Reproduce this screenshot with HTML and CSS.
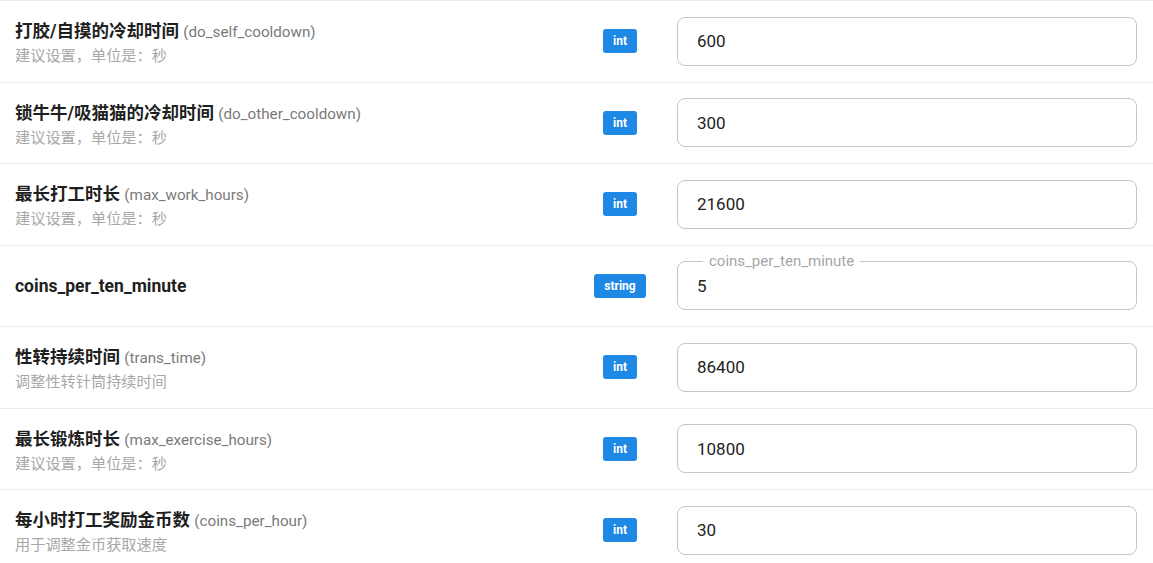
FILE: index.html
```html
<!DOCTYPE html>
<html lang="zh-CN">
<head>
<meta charset="utf-8">
<title>配置</title>
<link rel="stylesheet" href="styles.css">
</head>
<body>
<div class="list">
  <div class="row">
    <div class="label with-desc">
      <div class="title">打胶/自摸的冷却时间 <span class="key">(do_self_cooldown)</span></div>
      <div class="desc">建议设置，单位是：秒</div>
    </div>
    <div class="type"><span class="badge">int</span></div>
    <div class="field"><div class="input">600</div></div>
  </div>
  <div class="row">
    <div class="label with-desc">
      <div class="title">锁牛牛/吸猫猫的冷却时间 <span class="key">(do_other_cooldown)</span></div>
      <div class="desc">建议设置，单位是：秒</div>
    </div>
    <div class="type"><span class="badge">int</span></div>
    <div class="field"><div class="input">300</div></div>
  </div>
  <div class="row">
    <div class="label with-desc">
      <div class="title">最长打工时长 <span class="key">(max_work_hours)</span></div>
      <div class="desc">建议设置，单位是：秒</div>
    </div>
    <div class="type"><span class="badge">int</span></div>
    <div class="field"><div class="input">21600</div></div>
  </div>
  <div class="row">
    <div class="label">
      <div class="title">coins_per_ten_minute</div>
    </div>
    <div class="type"><span class="badge">string</span></div>
    <div class="field"><div class="input outlined"><span class="legend">coins_per_ten_minute</span>5</div></div>
  </div>
  <div class="row">
    <div class="label with-desc">
      <div class="title">性转持续时间 <span class="key">(trans_time)</span></div>
      <div class="desc">调整性转针筒持续时间</div>
    </div>
    <div class="type"><span class="badge">int</span></div>
    <div class="field"><div class="input">86400</div></div>
  </div>
  <div class="row">
    <div class="label with-desc">
      <div class="title">最长锻炼时长 <span class="key">(max_exercise_hours)</span></div>
      <div class="desc">建议设置，单位是：秒</div>
    </div>
    <div class="type"><span class="badge">int</span></div>
    <div class="field"><div class="input">10800</div></div>
  </div>
  <div class="row">
    <div class="label with-desc">
      <div class="title">每小时打工奖励金币数 <span class="key">(coins_per_hour)</span></div>
      <div class="desc">用于调整金币获取速度</div>
    </div>
    <div class="type"><span class="badge">int</span></div>
    <div class="field"><div class="input">30</div></div>
  </div>
</div>
</body>
</html>
```
FILE: styles.css
```css
html, body {
  margin: 0;
  padding: 0;
  background: #ffffff;
}
body {
  font-family: Roboto, "Noto Sans CJK SC", sans-serif;
  color: #222;
}
.list {
  border-top: 1px solid #ebebeb;
}
.row {
  display: flex;
  align-items: center;
  height: 80.5px;
  padding: 0 16px 0 15px;
  border-bottom: 1px solid #ebebeb;
}
.label {
  flex: 1;
  display: flex;
  flex-direction: column;
  gap: 3px;
}
.label.with-desc {
  padding-top: 4px;
}
.title {
  font-size: 17.5px;
  font-weight: 700;
  color: #1f1f1f;
  line-height: 22px;
}
.key {
  font-size: 15.2px;
  font-weight: 400;
  color: #7a7a7a;
}
.desc {
  font-size: 15.2px;
  color: #a8a8a8;
  line-height: 20px;
}
.type {
  width: 80px;
  display: flex;
  justify-content: center;
  margin-right: 17px;
}
.badge {
  background: #1e88e5;
  color: #fff;
  font-size: 12px;
  font-weight: 700;
  line-height: 24px;
  padding: 0 10px;
  border-radius: 3px;
}
.field {
  width: 460px;
}
.input {
  position: relative;
  box-sizing: border-box;
  height: 49px;
  border: 1px solid #c6c6c6;
  border-radius: 8px;
  padding: 0 19px;
  display: flex;
  align-items: center;
  font-size: 17px;
  color: #222;
}
.legend {
  position: absolute;
  top: -10px;
  left: 25px;
  padding: 0 6px;
  background: #fff;
  font-size: 15px;
  color: #a6a6a6;
  line-height: 18px;
}
```
